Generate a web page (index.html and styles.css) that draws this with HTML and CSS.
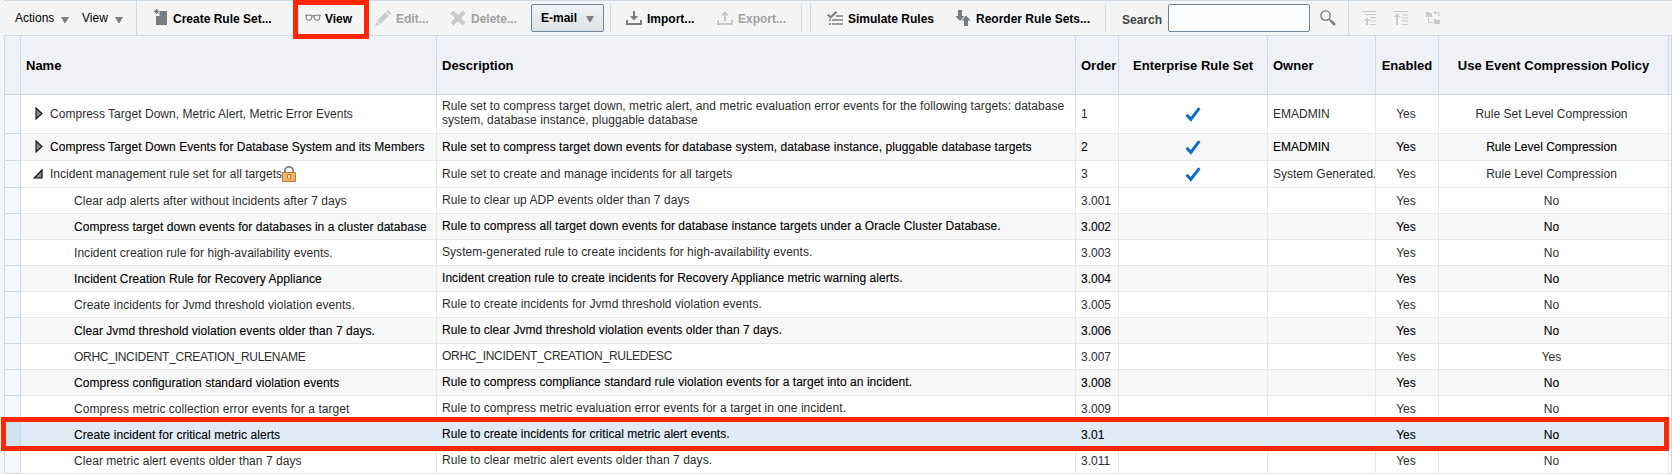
FILE: index.html
```html
<!DOCTYPE html>
<html lang="en">
<head>
<meta charset="utf-8">
<title>Incident Rules</title>
<link rel="stylesheet" href="styles.css">
</head>
<body>
<svg class="defs" width="0" height="0">
  <symbol id="check" viewBox="0 0 18 18"><path d="M2.6 9.8 6.8 14.4 15.4 3.2" fill="none" stroke="#0a6bd0" stroke-width="3"/></symbol>
  <symbol id="closed" viewBox="0 0 8 13"><path d="M1 1 7 6.5 1 12Z" fill="#858a90" stroke="#111" stroke-width="1.1"/></symbol>
  <symbol id="open" viewBox="0 0 10 10"><path d="M9 1V9H1Z" fill="#858a90" stroke="#111" stroke-width="1.2"/></symbol>
  <symbol id="down" viewBox="0 0 8 6"><path d="M0 0H8L4.6 6H3.4Z" fill="#7b8084"/></symbol>
</svg>
<div class="page">
  <div class="toolbar">
    <div class="item menu actions">Actions<svg width="8" height="6"><use href="#down"/></svg></div>
    <div class="item menu viewmenu">View<svg width="8" height="6"><use href="#down"/></svg></div>
    <div class="sep full"></div>
    <div class="item create"><svg width="14" height="17" viewBox="0 0 14 17"><path d="M2 7H5.5V2H13V16H2Z" fill="#777d80"/><path d="M2.5 0V5M0 2.5H5M.7.7 4.3 4.3M4.3.7.7 4.3" stroke="#777d80"/></svg><span>Create Rule Set...</span></div>
    <div class="item glasses"><svg width="16" height="8" viewBox="0 0 16 8"><path d="M0 1.2H6.5L8 2 9.500 1.200H16M1.200 1.500C1 5 2 6.300 4 6.300S7 5 7 1.500M9 1.500C9 5 10 6.300 12 6.300S15 5 14.800 1.500" fill="none" stroke="#7b8084" stroke-width="1.1"/></svg><span>View</span><i class="mark"></i></div>
    <div class="item off edit"><svg width="16" height="17" viewBox="0 0 16 17"><path d="M0 16.500 1.500 11.500 4.800 14.800ZM2.300 10.500 10.200 2.600 13.500 5.900 5.600 13.800ZM11 1.800 12.500.3Q13-.2 13.500.3L15.800 2.600Q16.200 3 15.800 3.500L14.300 5Z" fill="#c8caca"/></svg><span>Edit...</span></div>
    <div class="item off delete"><svg width="16" height="16" viewBox="0 0 16 16"><path d="M2 2 14 14M14 2 2 14" stroke="#c8caca" stroke-width="4.2"/></svg><span>Delete...</span></div>
    <div class="mail">E-mail<svg width="8" height="6"><use href="#down"/></svg></div>
    <div class="sep"></div>
    <div class="item import"><svg width="16" height="14" viewBox="0 0 16 14"><path d="M8 0V7M1 9V13H15V9" fill="none" stroke="#777d80" stroke-width="2"/><path d="M4 5H12L8 9.500Z" fill="#777d80"/></svg><span>Import...</span></div>
    <div class="item off export"><svg width="16" height="14" viewBox="0 0 16 14"><path d="M8 3V10M1 9V13H15V9" fill="none" stroke="#c8caca" stroke-width="2"/><path d="M4 4.500H12L8 0Z" fill="#c8caca"/></svg><span>Export...</span></div>
    <div class="sep"></div>
    <div class="sep"></div>
    <div class="item simulate"><svg width="16" height="15" viewBox="0 0 16 15"><path d="M.6 3.500 3.600 6.300 9.500.7" fill="none" stroke="#777d80" stroke-width="2"/><path d="M9 5H16M5 9H16M5 13H16M2 9H4M2 13H4" stroke="#777d80" stroke-width="1.7"/></svg><span>Simulate Rules</span></div>
    <div class="item reorder"><svg width="16" height="16" viewBox="0 0 16 16"><path d="M3 0H7V6H9.500L5 11 .3 6H3ZM9 16V10.500H6.500L11 5.500 15.700 10.500H13V16Z" fill="#777d80"/></svg><span>Reorder Rule Sets...</span></div>
    <div class="sep"></div>
    <label class="search" for="q">Search</label>
    <input id="q" class="query" type="text">
    <div class="item"><svg width="16" height="16" viewBox="0 0 16 16"><circle cx="5.600" cy="5.600" r="4.700" fill="none" stroke="#777d80" stroke-width="1.4"/><path d="M9 9 11 11" stroke="#777d80" stroke-width="1.300"/><path d="M10.700 10.700 15 15" stroke="#777d80" stroke-width="2.500"/></svg></div>
    <div class="sep full"></div>
    <div class="item"><svg width="14" height="14" viewBox="0 0 14 14"><path d="M0 .5H14M3 3.500H14M8 6.500H14M8 10H14M8 13.500H14" fill="none" stroke="#c9caca" stroke-width="1.200"/><path d="M2 10 5 6.500 8 10H6V14H4V10Z" fill="#c9caca"/></svg></div>
    <div class="item"><svg width="14" height="14" viewBox="0 0 14 14"><path d="M0 .5H14M8 4H14M8 7H14M8 10H14M8 13.500H14" stroke="#c9caca" stroke-width="1.200"/><path d="M0 6 3 2.500 6 6H4V14H2V6Z" fill="#c9caca"/></svg></div>
    <div class="item"><svg width="14" height="14" viewBox="0 0 14 14"><path d="M0 1H3L4 2H6V6H0ZM8 8H10L11 9H14V13H8Z" fill="#c9caca"/><path d="M2.500 7V11.500H7M8 1.500H13V5" fill="none" stroke="#c9caca"/><path d="M7 1.500 10 0V3.500Z" fill="#c9caca"/></svg></div>
  </div>

  <div class="grid">
    <div class="row head"><div></div><div class="name">Name</div><div>Description</div><div>Order</div><div class="c">Enterprise Rule Set</div><div>Owner</div><div class="c">Enabled</div><div class="c">Use Event Compression Policy</div><div></div></div>
    <div class="row set first"><div></div><div class="name"><svg class="tri" width="8" height="13"><use href="#closed"/></svg>Compress Target Down, Metric Alert, Metric Error Events</div><div class="desc"><p>Rule set to compress target down, metric alert, and metric evaluation error events for the following targets: database<br>system, database instance, pluggable database</p></div><div>1</div><div class="c"><svg width="18" height="18"><use href="#check"/></svg></div><div>EMADMIN</div><div class="c">Yes</div><div class="c">Rule Set Level Compression</div><div></div></div>
    <div class="row set alt"><div></div><div class="name"><svg class="tri" width="8" height="13"><use href="#closed"/></svg>Compress Target Down Events for Database System and its Members</div><div class="desc">Rule set to compress target down events for database system, database instance, pluggable database targets</div><div>2</div><div class="c"><svg width="18" height="18"><use href="#check"/></svg></div><div>EMADMIN</div><div class="c">Yes</div><div class="c">Rule Level Compression</div><div></div></div>
    <div class="row set locked"><div></div><div class="name"><svg class="tri" width="10" height="10"><use href="#open"/></svg>Incident management rule set for all targets<svg class="lock" width="14" height="16" viewBox="0 0 14 16"><path d="M3 7V4.500A4 3.700 0 0 1 11 4.500V7" fill="none" stroke="#82898f" stroke-width="2"/><path d="M.5 6.500H13.500V15.500H.5Z" fill="#f6b565" stroke="#c07a35"/><path d="M5.500 8.500H8.500V13H5.500Z" fill="#fbe3bd" stroke="#c07a35"/></svg></div><div class="desc">Rule set to create and manage incidents for all targets</div><div>3</div><div class="c"><svg width="18" height="18"><use href="#check"/></svg></div><div class="clip">System Generated.</div><div class="c">Yes</div><div class="c">Rule Level Compression</div><div></div></div>
    <div class="row"><div></div><div class="name">Clear adp alerts after without incidents after 7 days</div><div class="desc">Rule to clear up ADP events older than 7 days</div><div>3.001</div><div></div><div></div><div class="c">Yes</div><div class="c">No</div><div></div></div>
    <div class="row alt"><div></div><div class="name">Compress target down events for databases in a cluster database</div><div class="desc">Rule to compress all target down events for database instance targets under a Oracle Cluster Database.</div><div>3.002</div><div></div><div></div><div class="c">Yes</div><div class="c">No</div><div></div></div>
    <div class="row"><div></div><div class="name">Incident creation rule for high-availability events.</div><div class="desc">System-generated rule to create incidents for high-availability events.</div><div>3.003</div><div></div><div></div><div class="c">Yes</div><div class="c">No</div><div></div></div>
    <div class="row alt"><div></div><div class="name">Incident Creation Rule for Recovery Appliance</div><div class="desc">Incident creation rule to create incidents for Recovery Appliance metric warning alerts.</div><div>3.004</div><div></div><div></div><div class="c">Yes</div><div class="c">No</div><div></div></div>
    <div class="row"><div></div><div class="name">Create incidents for Jvmd threshold violation events.</div><div class="desc">Rule to create incidents for Jvmd threshold violation events.</div><div>3.005</div><div></div><div></div><div class="c">Yes</div><div class="c">No</div><div></div></div>
    <div class="row alt"><div></div><div class="name">Clear Jvmd threshold violation events older than 7 days.</div><div class="desc">Rule to clear Jvmd threshold violation events older than 7 days.</div><div>3.006</div><div></div><div></div><div class="c">Yes</div><div class="c">No</div><div></div></div>
    <div class="row caps"><div></div><div class="name">ORHC_INCIDENT_CREATION_RULENAME</div><div class="desc">ORHC_INCIDENT_CREATION_RULEDESC</div><div>3.007</div><div></div><div></div><div class="c">Yes</div><div class="c">Yes</div><div></div></div>
    <div class="row alt"><div></div><div class="name">Compress configuration standard violation events</div><div class="desc">Rule to compress compliance standard rule violation events for a target into an incident.</div><div>3.008</div><div></div><div></div><div class="c">Yes</div><div class="c">No</div><div></div></div>
    <div class="row"><div></div><div class="name">Compress metric collection error events for a target</div><div class="desc">Rule to compress metric evaluation error events for a target in one incident.</div><div>3.009</div><div></div><div></div><div class="c">Yes</div><div class="c">No</div><div></div></div>
    <div class="row alt selected"><div></div><div class="name">Create incident for critical metric alerts</div><div class="desc">Rule to create incidents for critical metric alert events.</div><div>3.01</div><div></div><div></div><div class="c">Yes</div><div class="c">No</div><div></div><i class="mark"></i></div>
    <div class="row"><div></div><div class="name">Clear metric alert events older than 7 days</div><div class="desc">Rule to clear metric alert events older than 7 days.</div><div>3.011</div><div></div><div></div><div class="c">Yes</div><div class="c">No</div><div></div></div>
  </div>
</div>
</body>
</html>
```
FILE: styles.css
```css
* { box-sizing: border-box; }
body {
  margin: 0;
  height: 474px;
  overflow: hidden;
  font: 12px/14px "Liberation Sans", Arial, sans-serif;
  color: #2d2d2d;
  background: repeating-linear-gradient(45deg, #f9f9f9 0 1.414px, #f0f0f0 1.414px 2.828px);
}
svg { display: block; flex: none; }
.defs { position: absolute; }
.page { padding-left: 4px; }

.toolbar {
  height: 35px;
  border-top: 1px solid #cddae5;
  display: grid;
  grid-template-columns: 11px 67px 54px 18px 151px 70px 75px 81px 79px 16px 91px 84px 9px 17px 128px 150px 17px 46px 152px 28px 14px 32px 32px 32px;
  align-items: center;
  color: #000;
}
.item { display: flex; align-items: center; gap: 5px; font-weight: bold; white-space: nowrap; position: relative; }
.item span { padding-top: 2px; }
.menu { font-weight: normal; gap: 7px; }
.menu svg { margin-top: 4px; }
.actions { grid-column: 2; }
.create svg { margin-bottom: 1px; }
.glasses { gap: 4px; }
.off { color: #a2a2a2; }
.sep { width: 1px; height: 28px; background: #cddae5; }
.sep.full { height: 34px; }
.mail {
  width: 73px;
  height: 28px;
  border: 1px solid #708598;
  border-radius: 2px;
  background: linear-gradient(#f0f3f5, #dce1e5);
  font-weight: bold;
  display: flex;
  align-items: center;
  padding-left: 9px;
  gap: 9px;
}
.mail svg { margin-top: 2px; }
.search { font-weight: bold; color: #444; padding-top: 3px; }
.query { width: 142px; height: 28px; border: 1px solid #708598; border-radius: 2px; background: #fcfdff; padding: 0 4px; }
.mark { position: absolute; border: 5px solid #ff2600; z-index: 2; }
.glasses .mark { left: -12px; top: -10px; width: 76px; height: 39px; }

.grid { border: 1px solid #cddae5; border-bottom: 0; background: #fff; }
.row {
  display: grid;
  grid-template-columns: 16px 416px 639px 43px 149px 108px 63px 230px 1fr;
  height: 26px;
  position: relative;
}
.row > div {
  border: solid #e5e7e8;
  border-width: 0 1px 1px 0;
  padding: 1px 5px 0;
  display: flex;
  align-items: center;
  white-space: nowrap;
  min-width: 0;
}
.row > div:last-of-type { border-right: 0; padding: 0; }
.row > div:first-child { background: #f5f8fd; border-color: #cddae5; padding: 0; }
.row > .name { padding-left: 53px; letter-spacing: .05px; }
.row > .desc { padding-bottom: 1px; padding-top: 0; letter-spacing: .05px; }
.row > .c { justify-content: center; padding: 1px 7px 0 5px; }
.row > .c:nth-child(8) { padding-right: 9px; }
.row > .clip { overflow: hidden; padding-right: 0; }
.row.set { height: 27px; }
.row.set > div { padding-top: 0; padding-bottom: 1px; }
.row.set > .c:nth-child(5) { padding-right: 5px; }
.row.set > .name { padding-left: 11px; letter-spacing: .03px; }
.row.first { height: 39px; }
.row.first > .desc { padding-bottom: 2px; }
.row.caps > .name, .row.caps > .desc { letter-spacing: -.27px; }
.tri { margin: 0 7px 0 3px; }
.locked .tri { margin: 1px 7px 0 1px; }
p { margin: 0; }
.alt { background: #f7f7f7; color: #000; -webkit-text-stroke: .1px #000; }
.row.head { height: 59px; background: #eff1f6; color: #000; font-weight: bold; font-size: 13px; }
.row.head > div { border-color: #cddae5; padding-top: 1px; background: #eff1f6; }
.row.head > .c { padding-right: 5px; }
.row.head > .name { padding-left: 5px; letter-spacing: 0; }
.row.selected { background: #dfecf8; }
.row.selected > div:first-child { background: #d0e4ef; }
.selected > .mark { left: -4px; top: -5px; width: 1668px; height: 34px; }
```
